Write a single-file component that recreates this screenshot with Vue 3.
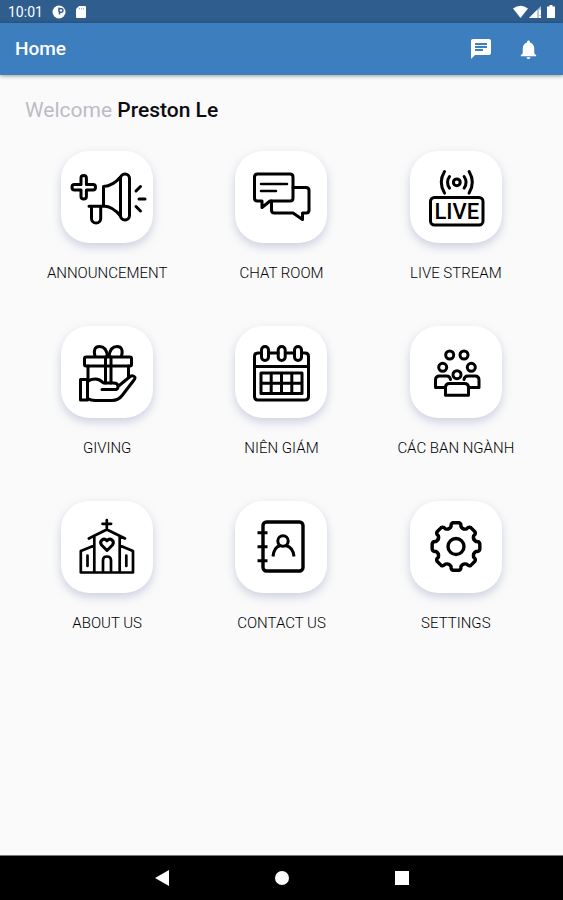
<script setup>
const tiles = [
  { id: 'announcement', label: 'ANNOUNCEMENT' },
  { id: 'chat', label: 'CHAT ROOM' },
  { id: 'live', label: 'LIVE STREAM' },
  { id: 'giving', label: 'GIVING' },
  { id: 'calendar', label: 'NIÊN GIÁM' },
  { id: 'groups', label: 'CÁC BAN NGÀNH' },
  { id: 'church', label: 'ABOUT US' },
  { id: 'contact', label: 'CONTACT US' },
  { id: 'settings', label: 'SETTINGS' },
]

// Outline of an eight-tooth gear centred on (46, 45.5).
function gearPath() {
  const at = (r, deg) => {
    const a = (deg * Math.PI) / 180
    return `${(46 + r * Math.cos(a)).toFixed(2)} ${(45.5 + r * Math.sin(a)).toFixed(2)}`
  }
  let d = ''
  for (let k = 0; k < 8; k++) {
    const a = k * 45
    d += `${k ? 'L' : 'M'}${at(20.5, a - 14)}Q${at(23.8, a - 13)} ${at(24, a - 7)}`
    d += `L${at(24, a + 7)}Q${at(23.8, a + 13)} ${at(20.5, a + 14)}`
    d += `Q${at(18, a + 22.5)} ${at(20.5, a + 31)}`
  }
  return d + 'Z'
}
const gear = gearPath()
</script>

<template>
  <div class="screen">
    <div class="status">
      <span class="clock">10:01</span>
      <svg class="status-icon" width="14" height="14" viewBox="0 0 14 14" aria-hidden="true">
        <circle cx="7" cy="7" r="6.5" fill="#fff" />
        <path d="M7 2.500V7M7 3.800h2.500q1.500 0 1.500 1.700T9.500 7.200H7.500V9.500" fill="none" stroke="#2e5d8e" stroke-width="1.500" />
      </svg>
      <svg class="status-icon" width="12" height="14" viewBox="0 0 12 14" aria-hidden="true">
        <path d="M4 1h6q1 0 1 1v10q0 1-1 1H2q-1 0-1-1V4z" fill="#fff" />
        <path d="M4.500 3v1.500M6.500 3v1.500M8.500 3v1.500" stroke="#9db5cd" stroke-width="1" />
      </svg>
      <svg class="signals" width="44" height="14" viewBox="0 0 44 14" aria-hidden="true">
        <path d="M1 3.500Q8.500-2 16 3.500L8.500 13z" fill="#fff" />
        <path d="M17 13 29 1v12z" fill="#b4c6d9" />
        <path d="M17 13 25 5v8z" fill="#fff" />
        <path d="M27 5h2v5h-2zM27 11h2v2h-2z" fill="#fff" />
        <path d="M35 1.500h2.500V0h3v1.500H43V13h-8z" fill="#fff" />
      </svg>
    </div>

    <header class="appbar">
      <h1>Home</h1>
      <button class="bar-btn" type="button" aria-label="Messages">
        <svg width="24" height="24" viewBox="0 0 24 24">
          <path fill="#fff" d="M20 2H4c-1.100 0-2 .9-2 2v18l4-4h14c1.100 0 2-.9 2-2V4c0-1.100-.9-2-2-2zM6 6h12v2H6zm0 3h12v2H6zm8 5H6v-2h8z" />
        </svg>
      </button>
      <button class="bar-btn" type="button" aria-label="Notifications">
        <svg width="23" height="23" viewBox="0 0 24 24">
          <path fill="#fff" d="M12 22c1.100 0 2-.9 2-2h-4c0 1.100.9 2 2 2zm6-6v-5c0-3.070-1.640-5.640-4.500-6.320V4c0-.83-.67-1.500-1.500-1.500s-1.500.67-1.500 1.500v.68C7.630 5.360 6 7.920 6 11v5l-2 2v1h16v-1z" />
        </svg>
      </button>
    </header>

    <main class="content">
      <p class="welcome">Welcome <strong>Preston Le</strong></p>
      <nav class="grid" aria-label="Main menu">
        <a v-for="t in tiles" :key="t.id" class="item" href="#">
          <span class="tile">
            <svg class="glyph" viewBox="0 0 92 92" aria-hidden="true">
              <g v-if="t.id === 'announcement'">
                <path d="M20 33.500V27q0-2.500 2.700-2.500T25.400 27v6.500H32q2.500 0 2.500 2.700T32 39h-6.600v6.500q0 2.500-2.700 2.500T20 45.500V39h-6.500Q11 39 11 36.200t2.500-2.700z" />
                <rect x="59.500" y="23" width="9" height="46" rx="4.500" />
                <path d="M59.500 26Q52 35 42.500 35.500V55Q52 55.500 59.500 65M28 55.200H43M30.500 55.500V67.500a4.600 4.600 0 0 0 9.200 0V55.500M75 40l4.500-4.500M78 48h6M75 55.500l4.500 4.500" />
              </g>
              <g v-else-if="t.id === 'chat'">
                <path d="M22.500 23h32.500q3 0 3 3v21q0 3-3 3H35l-8 6.500V50h-4.500q-3 0-3-3V26q0-3 3-3z" />
                <path d="M58 36.500h13q3 0 3 3V59q0 3-3 3h-3.500v6.500L58 62H39.500q-3 0-3-3v-9" />
                <path d="M26 33h26M26 40h15" stroke-width="2.500" />
              </g>
              <g v-else-if="t.id === 'live'">
                <rect x="20.500" y="46.500" width="52.500" height="27.500" rx="4" />
                <circle cx="46.800" cy="31.300" r="3.400" />
                <path d="M39.500 25.500q-4 5.800 0 11.600M54.100 25.500q4 5.800 0 11.600M34.500 20.500q-6.500 10.800 0 21.600M59.100 20.500q6.500 10.800 0 21.600" />
                <text class="live-text" x="46.800" y="68" text-anchor="middle">LIVE</text>
              </g>
              <g v-else-if="t.id === 'giving'">
                <rect x="23.500" y="31" width="47" height="9" rx="1.500" />
                <path d="M27 40v13M67.500 40v11M44.500 31v26M50 31v26" />
                <path d="M46.500 30.500Q45.500 20.500 38.500 20.500T34 30.500M48 30.500Q49 20.500 56 20.500T60.500 30.500" />
                <path d="M19.500 53.500h7V74h-7z" />
                <path d="M26.500 55.500q3-2.500 8-2.500 4 0 8 4h10q4.500 0 4.500 3.500t-4 3H41M57 60.500 68.500 51q4-2.500 5.500.5 0 1.500-1 2.500L61.500 69q-4 5.500-10.500 5.500H34q-4 0-7.500-2" />
              </g>
              <g v-else-if="t.id === 'calendar'">
                <path d="M26 27h-3q-3.500 0-3.500 3.500V70.500q0 3.500 3.500 3.500h47q3.500 0 3.500-3.500V30.500Q73.500 27 70 27h-3M34 27h9M50.500 27h9M19.500 40.500h54" />
                <rect x="26.500" y="20.500" width="7" height="14" rx="3.500" />
                <rect x="43.200" y="20.500" width="7" height="14" rx="3.500" />
                <rect x="59.500" y="20.500" width="7" height="14" rx="3.500" />
                <path d="M26 47h41v20.500H26zM26 57.200h41M36.200 47v20.500M46.500 47v20.500M56.800 47v20.500" />
              </g>
              <g v-else-if="t.id === 'groups'">
                <circle cx="39.700" cy="29" r="4" />
                <circle cx="54" cy="29" r="4" />
                <circle cx="32.700" cy="41.300" r="4" />
                <circle cx="61.300" cy="41.300" r="4" />
                <circle cx="47" cy="48.700" r="4" />
                <path d="M35.500 61.500H25.500V54q0-4 4-4h7q3.500 0 4 3.500M58.500 61.500H69V54q0-4-4-4h-7q-3.500 0-4 3.500" />
                <path d="M35.500 69.200V61.500q0-4 4-4h15q4 0 4 4v7.700z" />
              </g>
              <g v-else-if="t.id === 'church'">
                <path d="M45.800 19v10M41.500 22.800h8.600M27.800 37.500 45.800 28.500 64 37.500M33.300 35.500V71.500M58.700 35.500V71.500M33.300 44.500 19.800 50V71.500H72V50L58.700 44.500M26.500 54.500v10.500M65.300 54.500v10.500M42 71.500V59q0-3.500 3.900-3.500T50 59V71.500" stroke-width="2.700" />
                <path d="M46 49.500l-5.500-5.500q-2-3 .5-5t5 .8q2.500-2.800 5-.8t.5 5z" />
              </g>
              <g v-else-if="t.id === 'contact'">
                <rect x="28" y="21" width="40" height="49" rx="3.500" stroke-width="3.400" />
                <path d="M22.500 31.700h10M22.500 45.700h10M22.500 59.700h10" stroke-linecap="butt" />
                <circle cx="48" cy="40" r="5.200" />
                <path d="M38 55.500Q39 46 45 44.700M51 44.700Q58 46 59 55.500" stroke-linecap="butt" />
              </g>
              <g v-else>
                <path :d="gear" stroke-width="3.400" />
                <circle cx="46" cy="45.500" r="8" stroke-width="3.400" />
              </g>
            </svg>
          </span>
          <span class="label">{{ t.label }}</span>
        </a>
      </nav>
    </main>

    <footer class="navbar">
      <button type="button" aria-label="Back">
        <svg width="16" height="16" viewBox="0 0 16 16"><path d="M1 8 15 0v16z" fill="#fff" /></svg>
      </button>
      <button type="button" aria-label="Home screen">
        <svg width="16" height="16" viewBox="0 0 16 16"><circle cx="8" cy="8" r="7" fill="#fff" /></svg>
      </button>
      <button type="button" aria-label="Recent apps">
        <svg width="16" height="16" viewBox="0 0 16 16"><path d="M1 1h14v14H1z" fill="#fff" /></svg>
      </button>
    </footer>
  </div>
</template>

<style>
body {
  margin: 0;
  background: #fafafa;
}
</style>

<style scoped>
.screen {
  min-height: 100vh;
  display: flex;
  flex-direction: column;
  font-family: Roboto, "Noto Sans", sans-serif;
  background: #fafafa;
}

button {
  border: 0;
  padding: 0;
  background: none;
  display: flex;
  align-items: center;
  justify-content: center;
  cursor: pointer;
}

.status {
  height: 23px;
  padding: 0 7px 0 8px;
  display: flex;
  align-items: center;
  gap: 9px;
  background: #2e5d8e;
  color: #fff;
}

.clock {
  font-size: 14px;
  line-height: 20px;
}

.signals {
  margin-left: auto;
}

.appbar {
  height: 52px;
  padding: 0 21px 0 15px;
  display: flex;
  align-items: center;
  gap: 19px;
  background: #3d7ebf;
  color: #fff;
  box-shadow: 0 1px 4px rgba(0, 0, 0, 0.4);
}

h1 {
  margin: 0;
  flex: 1;
  font-size: 19px;
  line-height: 24px;
  font-weight: 500;
}

.bar-btn {
  width: 28px;
  height: 28px;
}

.content {
  flex: 1;
  padding: 22px 20px;
}

.welcome {
  margin: 0 5px 28px;
  font-size: 21px;
  line-height: 26px;
  color: #bcbcc6;
}

.welcome strong {
  font-weight: 500;
  color: #0c0c10;
}

.grid {
  display: grid;
  grid-template-columns: repeat(3, 1fr);
  row-gap: 43px;
}

.item {
  display: flex;
  flex-direction: column;
  align-items: center;
  gap: 20px;
  text-decoration: none;
  color: #000;
}

.tile {
  width: 92px;
  height: 92px;
  border-radius: 28px;
  background: #fff;
  box-shadow: 0 4px 10px rgba(110, 130, 175, 0.34);
}

.glyph {
  display: block;
  width: 92px;
  height: 92px;
  fill: none;
  stroke: #000;
  stroke-width: 3;
  stroke-linecap: round;
  stroke-linejoin: round;
}

.live-text {
  font-size: 22px;
  font-weight: 500;
  fill: #000;
  stroke: none;
}

.label {
  font-size: 15px;
  line-height: 20px;
  font-weight: 300;
}

.navbar {
  height: 44px;
  border-top: 1px solid #777;
  display: flex;
  align-items: center;
  justify-content: center;
  gap: 80px;
  background: #000;
}

.navbar button {
  width: 40px;
  height: 40px;
}
</style>
